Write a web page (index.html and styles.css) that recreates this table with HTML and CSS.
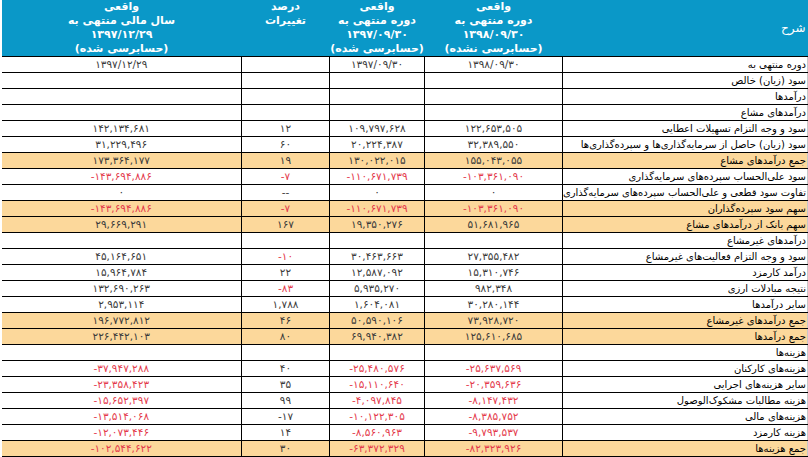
FILE: index.html
```html
<!DOCTYPE html>
<html lang="fa" dir="rtl">
<head>
<meta charset="utf-8">
<title>صورت سود و زیان</title>
<link rel="stylesheet" href="styles.css">
</head>
<body>
<table class="report">
  <colgroup>
    <col class="c-desc"><col class="c-98"><col class="c-97"><col class="c-pct"><col class="c-year">
  </colgroup>
  <thead>
    <tr class="head">
      <th class="h-desc">شرح</th>
      <th>واقعی<br>دوره منتهی به<br><span class="num">۱۳۹۸/۰۹/۳۰</span><br>(حسابرسی نشده)</th>
      <th>واقعی<br>دوره منتهی به<br><span class="num">۱۳۹۷/۰۹/۳۰</span><br>(حسابرسی شده)</th>
      <th class="h-top">درصد<br>تغییرات</th>
      <th>واقعی<br>سال مالی منتهی به<br><span class="num">۱۳۹۷/۱۲/۲۹</span><br>(حسابرسی شده)</th>
    </tr>
  </thead>
  <tbody>
    <tr><td class="d">دوره منتهی به</td><td class="n">۱۳۹۸/۰۹/۳۰</td><td class="n">۱۳۹۷/۰۹/۳۰</td><td class="n"></td><td class="n">۱۳۹۷/۱۲/۲۹</td></tr>
    <tr><td class="d">سود (زیان) خالص</td><td></td><td></td><td></td><td></td></tr>
    <tr><td class="d">درآمدها</td><td></td><td></td><td></td><td></td></tr>
    <tr><td class="d">درآمدهای مشاع</td><td></td><td></td><td></td><td></td></tr>
    <tr><td class="d">سود و وجه التزام تسهیلات اعطایی</td><td class="n">۱۲۲,۶۵۳,۵۰۵</td><td class="n">۱۰۹,۷۹۷,۶۲۸</td><td class="n">۱۲</td><td class="n">۱۴۲,۱۳۴,۶۸۱</td></tr>
    <tr><td class="d">سود (زیان) حاصل از سرمایه‌گذاری‌ها و سپرده‌گذاری‌ها</td><td class="n">۳۲,۳۸۹,۵۵۰</td><td class="n">۲۰,۲۲۴,۳۸۷</td><td class="n">۶۰</td><td class="n">۳۱,۲۲۹,۴۹۶</td></tr>
    <tr class="hl"><td class="d">جمع درآمدهای مشاع</td><td class="n">۱۵۵,۰۴۳,۰۵۵</td><td class="n">۱۳۰,۰۲۲,۰۱۵</td><td class="n">۱۹</td><td class="n">۱۷۳,۳۶۴,۱۷۷</td></tr>
    <tr><td class="d">سود علی‌الحساب سپرده‌های سرمایه‌گذاری</td><td class="n neg">-۱۰۳,۳۶۱,۰۹۰</td><td class="n neg">-۱۱۰,۶۷۱,۷۳۹</td><td class="n neg">-۷</td><td class="n neg">-۱۴۳,۶۹۴,۸۸۶</td></tr>
    <tr><td class="d">تفاوت سود قطعی و علی‌الحساب سپرده‌های سرمایه‌گذاری</td><td class="n">۰</td><td class="n">۰</td><td class="n">--</td><td class="n">۰</td></tr>
    <tr class="hl"><td class="d">سهم سود سپرده‌گذاران</td><td class="n neg">-۱۰۳,۳۶۱,۰۹۰</td><td class="n neg">-۱۱۰,۶۷۱,۷۳۹</td><td class="n neg">-۷</td><td class="n neg">-۱۴۳,۶۹۴,۸۸۶</td></tr>
    <tr class="hl"><td class="d">سهم بانک از درآمدهای مشاع</td><td class="n">۵۱,۶۸۱,۹۶۵</td><td class="n">۱۹,۳۵۰,۲۷۶</td><td class="n">۱۶۷</td><td class="n">۲۹,۶۶۹,۲۹۱</td></tr>
    <tr><td class="d">درآمدهای غیرمشاع</td><td></td><td></td><td></td><td></td></tr>
    <tr><td class="d">سود و وجه التزام فعالیت‌های غیرمشاع</td><td class="n">۲۷,۳۵۵,۴۸۲</td><td class="n">۳۰,۴۶۳,۶۶۳</td><td class="n neg">-۱۰</td><td class="n">۴۵,۱۶۴,۶۵۱</td></tr>
    <tr><td class="d">درآمد کارمزد</td><td class="n">۱۵,۳۱۰,۷۴۶</td><td class="n">۱۲,۵۸۷,۰۹۲</td><td class="n">۲۲</td><td class="n">۱۵,۹۶۴,۷۸۴</td></tr>
    <tr><td class="d">نتیجه مبادلات ارزی</td><td class="n">۹۸۲,۳۴۸</td><td class="n">۵,۹۳۵,۲۷۰</td><td class="n neg">-۸۳</td><td class="n">۱۳۲,۶۹۰,۲۶۳</td></tr>
    <tr><td class="d">سایر درآمدها</td><td class="n">۳۰,۲۸۰,۱۴۴</td><td class="n">۱,۶۰۴,۰۸۱</td><td class="n">۱,۷۸۸</td><td class="n">۲,۹۵۳,۱۱۴</td></tr>
    <tr class="hl"><td class="d">جمع درآمدهای غیرمشاع</td><td class="n">۷۳,۹۲۸,۷۲۰</td><td class="n">۵۰,۵۹۰,۱۰۶</td><td class="n">۴۶</td><td class="n">۱۹۶,۷۷۲,۸۱۲</td></tr>
    <tr class="hl"><td class="d">جمع درآمدها</td><td class="n">۱۲۵,۶۱۰,۶۸۵</td><td class="n">۶۹,۹۴۰,۳۸۲</td><td class="n">۸۰</td><td class="n">۲۲۶,۴۴۲,۱۰۳</td></tr>
    <tr><td class="d">هزینه‌ها</td><td></td><td></td><td></td><td></td></tr>
    <tr><td class="d">هزینه‌های کارکنان</td><td class="n neg">-۲۵,۶۳۷,۵۶۹</td><td class="n neg">-۲۵,۴۸۰,۵۷۶</td><td class="n">۴۰</td><td class="n neg">-۳۷,۹۴۷,۲۸۸</td></tr>
    <tr><td class="d">سایر هزینه‌های اجرایی</td><td class="n neg">-۲۰,۳۵۹,۶۳۶</td><td class="n neg">-۱۵,۱۱۰,۶۴۰</td><td class="n">۳۵</td><td class="n neg">-۲۳,۳۵۸,۴۲۳</td></tr>
    <tr><td class="d">هزینه مطالبات مشکوک‌الوصول</td><td class="n neg">-۸,۱۴۷,۴۳۲</td><td class="n neg">-۴,۰۹۷,۸۴۵</td><td class="n">۹۹</td><td class="n neg">-۱۵,۶۵۲,۳۹۷</td></tr>
    <tr><td class="d">هزینه‌های مالی</td><td class="n neg">-۸,۳۸۵,۷۵۲</td><td class="n neg">-۱۰,۱۲۲,۳۰۵</td><td class="n">-۱۷</td><td class="n neg">-۱۳,۵۱۴,۰۶۸</td></tr>
    <tr><td class="d">هزینه کارمزد</td><td class="n neg">-۹,۷۹۳,۵۳۷</td><td class="n neg">-۸,۵۶۰,۹۶۳</td><td class="n">۱۴</td><td class="n neg">-۱۲,۰۷۳,۴۴۶</td></tr>
    <tr class="hl"><td class="d">جمع هزینه‌ها</td><td class="n neg">-۸۲,۳۲۳,۹۲۶</td><td class="n neg">-۶۳,۳۷۲,۳۲۹</td><td class="n">۳۰</td><td class="n neg">-۱۰۲,۵۴۴,۶۲۲</td></tr>
  </tbody>
</table>
</body>
</html>
```

FILE: styles.css
```css
html, body {
  margin: 0;
  padding: 0;
  background: #ffffff;
}

body {
  font-family: "DejaVu Sans", "Noto Sans", sans-serif;
  font-size: 10px;
  color: #000;
}

.report {
  width: 806px;
  border-collapse: collapse;
  table-layout: fixed;
}

.c-desc { width: 245px; }
.c-98 { width: 138px; }
.c-97 { width: 95px; }
.c-pct { width: 88px; }
.c-year { width: 240px; }

.head th {
  height: 56px;
  padding: 0;
  background: #0a98c8;
  color: #ffffff;
  font-weight: bold;
  font-size: 11px;
  line-height: 14px;
  text-align: center;
  vertical-align: top;
  border-bottom: 1px solid #000;
}

.head th.h-desc {
  text-align: right;
  vertical-align: middle;
  font-weight: normal;
  font-size: 12px;
  padding-right: 2px;
}

.num {
  direction: ltr;
  unicode-bidi: isolate;
}

.report td {
  height: 15px;
  padding: 0;
  line-height: 15px;
  border: 1px solid #000;
  border-top: none;
  white-space: nowrap;
  overflow: hidden;
  vertical-align: bottom;
}

.report td:last-child {
  border-left: none;
}

.report td.d {
  text-align: right;
  padding-right: 1px;
  color: #000;
  font-size: 10px;
  border-right: 1px solid #c8c8c8;
}

.report td.n {
  text-align: center;
  direction: ltr;
  font-size: 10.5px;
  color: #3a3a3a;
}

.report td.neg {
  color: #e43a4c;
}

.report tr.hl td {
  background: #fcd89b;
}
```
